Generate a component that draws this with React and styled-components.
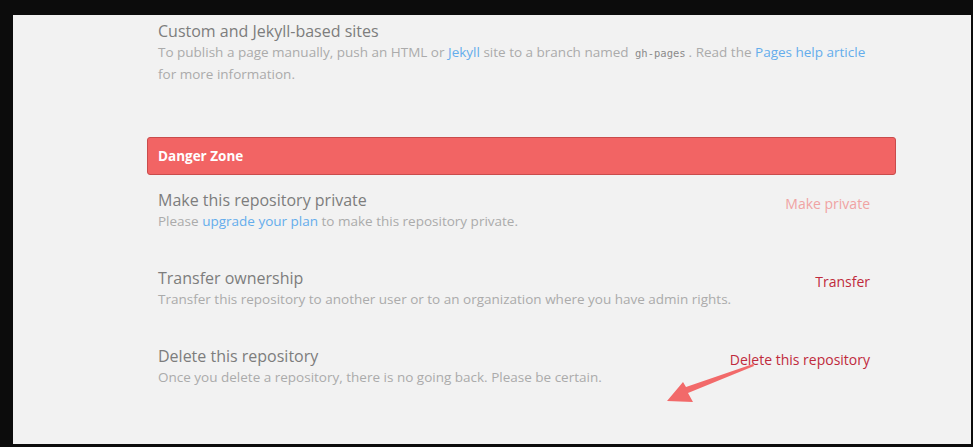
import React from 'react'
import styled, { createGlobalStyle } from 'styled-components'

const GlobalStyle = createGlobalStyle`
  html, body {
    margin: 0;
    padding: 0;
    background: #0c0c0c;
  }
  body {
    font-family: "Open Sans", "Noto Sans", sans-serif;
  }
`

const Frame = styled.div`
  padding: 15px 2px 3px 13px;
  height: 447px;
  box-sizing: border-box;
`

const Panel = styled.div`
  position: relative;
  height: 100%;
  background: #f2f2f2;
  padding-left: 134px;
  padding-top: 5px;
  box-sizing: border-box;
`

const Column = styled.div`
  width: 749px;
`

const Section = styled.div`
  padding: 0 11px;
`

const Title = styled.h3`
  margin: 0;
  font-size: 16px;
  line-height: 22px;
  font-weight: 400;
  color: #7d7d7d;
`

const Desc = styled.p`
  margin: 0;
  font-size: 13.5px;
  line-height: 21px;
  font-weight: 400;
  color: #ababab;
  white-space: nowrap;
`

const Link = styled.a`
  color: #64adec;
  text-decoration: none;
`

const Code = styled.code`
  font-family: "DejaVu Sans Mono", "Liberation Mono", monospace;
  font-size: 10.5px;
  color: #8a8a8a;
  padding: 0 3px;
`

const DangerHeader = styled.div`
  margin-top: 52px;
  height: 38px;
  box-sizing: border-box;
  background: #f26464;
  border: 1px solid #c94c4c;
  border-radius: 3px;
  padding: 0 10px;
  display: flex;
  align-items: center;
  font-size: 13.5px;
  font-weight: 700;
  color: #ffffff;
`

const Rows = styled.div`
  padding-top: 14px;
  display: flex;
  flex-direction: column;
  gap: 35px;
`

const Row = styled.div`
  display: flex;
  justify-content: space-between;
  align-items: flex-start;
  padding: 0 26px 0 11px;
`

const Action = styled.span`
  margin-top: 4px;
  font-size: 14px;
  line-height: 22px;
  color: ${p => (p.disabled ? '#f0a3a3' : '#c02a3c')};
`

const Arrow = styled.svg`
  position: absolute;
  left: 637px;
  top: 335px;
`

const rows = [
  {
    title: 'Make this repository private',
    desc: (
      <>
        Please <Link>upgrade your plan</Link> to make this repository private.
      </>
    ),
    action: 'Make private',
    disabled: true
  },
  {
    title: 'Transfer ownership',
    desc: 'Transfer this repository to another user or to an organization where you have admin rights.',
    action: 'Transfer'
  },
  {
    title: 'Delete this repository',
    desc: 'Once you delete a repository, there is no going back. Please be certain.',
    action: 'Delete this repository'
  }
]

export default function App() {
  return (
    <>
      <GlobalStyle />
      <Frame>
        <Panel>
          <Column>
            <Section>
              <Title>Custom and Jekyll-based sites</Title>
              <Desc>
                To publish a page manually, push an HTML or <Link>Jekyll</Link> site to a branch
                named <Code>gh-pages</Code>. Read the <Link>Pages help article</Link>
                <br />
                for more information.
              </Desc>
            </Section>
            <DangerHeader>Danger Zone</DangerHeader>
            <Rows>
              {rows.map(r => (
                <Row key={r.title}>
                  <div>
                    <Title>{r.title}</Title>
                    <Desc>{r.desc}</Desc>
                  </div>
                  <Action disabled={r.disabled}>{r.action}</Action>
                </Row>
              ))}
            </Rows>
          </Column>
          <Arrow width="110" height="60" viewBox="0 0 110 60">
            <path d="M103 14 L36 37 L33 32 L17 51 L43 52 L38 43 L104 16 Z" fill="#f26a6a" />
          </Arrow>
        </Panel>
      </Frame>
    </>
  )
}
